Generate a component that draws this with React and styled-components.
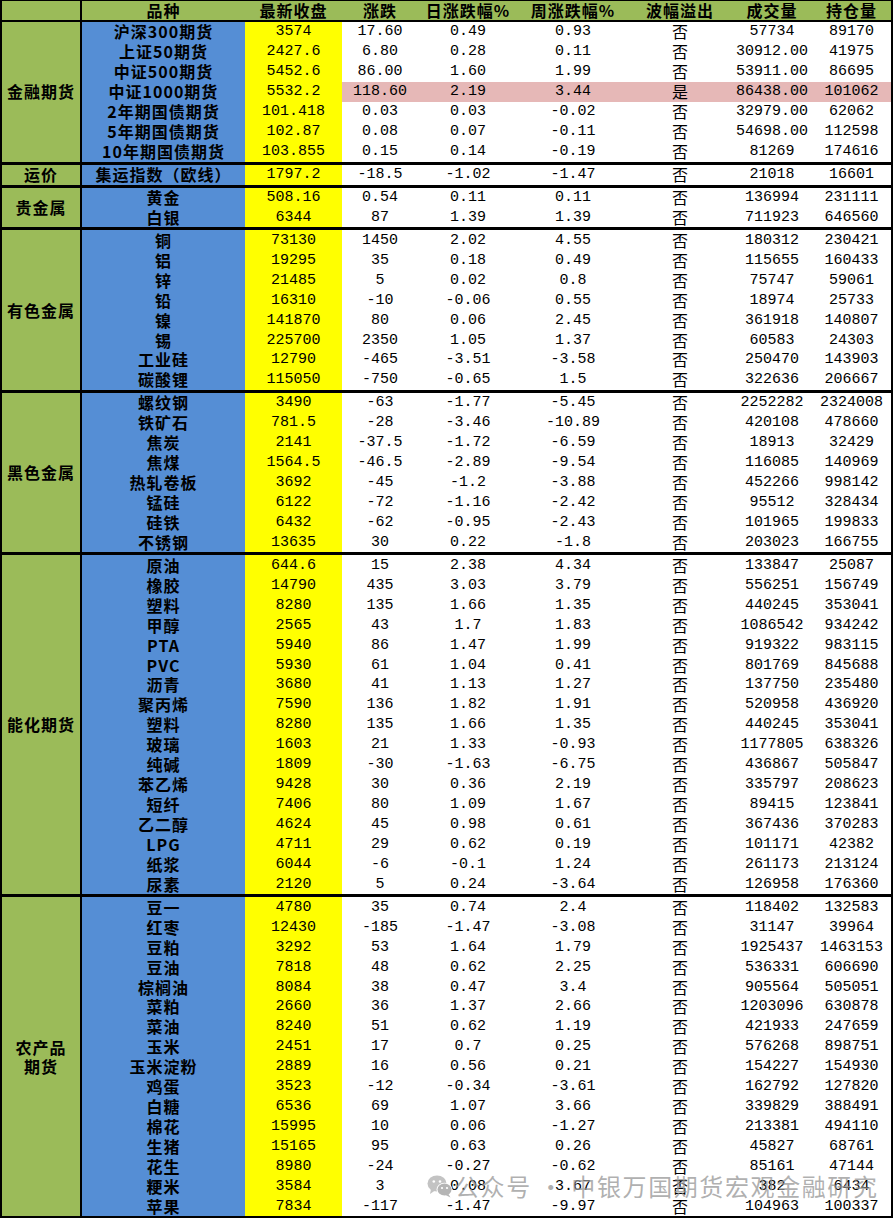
import React from 'react';
import styled, { createGlobalStyle } from 'styled-components';

const GlobalStyle = createGlobalStyle`
  html, body {
    margin: 0;
    padding: 0;
    background: #ffffff;
  }
  body {
    font-family: "Noto Sans CJK SC", "Liberation Sans", sans-serif;
    color: #000;
  }
`;

const COLS = '80px 163px 97px 76px 100px 110px 104px 80px 79px';
const ROW_COLS = '163px 97px 76px 100px 110px 104px 80px 79px';

const headers = ['品种', '最新收盘', '涨跌', '日涨跌幅%', '周涨跌幅%', '波幅溢出', '成交量', '持仓量'];

const groups = [
  {
    name: '金融期货',
    rows: [
      ['沪深300期货', '3574', '17.60', '0.49', '0.93', '否', '57734', '89170'],
      ['上证50期货', '2427.6', '6.80', '0.28', '0.11', '否', '30912.00', '41975'],
      ['中证500期货', '5452.6', '86.00', '1.60', '1.99', '否', '53911.00', '86695'],
      ['中证1000期货', '5532.2', '118.60', '2.19', '3.44', '是', '86438.00', '101062', true],
      ['2年期国债期货', '101.418', '0.03', '0.03', '-0.02', '否', '32979.00', '62062'],
      ['5年期国债期货', '102.87', '0.08', '0.07', '-0.11', '否', '54698.00', '112598'],
      ['10年期国债期货', '103.855', '0.15', '0.14', '-0.19', '否', '81269', '174616'],
    ],
  },
  {
    name: '运价',
    rows: [['集运指数（欧线）', '1797.2', '-18.5', '-1.02', '-1.47', '否', '21018', '16601']],
  },
  {
    name: '贵金属',
    rows: [
      ['黄金', '508.16', '0.54', '0.11', '0.11', '否', '136994', '231111'],
      ['白银', '6344', '87', '1.39', '1.39', '否', '711923', '646560'],
    ],
  },
  {
    name: '有色金属',
    rows: [
      ['铜', '73130', '1450', '2.02', '4.55', '否', '180312', '230421'],
      ['铝', '19295', '35', '0.18', '0.49', '否', '115655', '160433'],
      ['锌', '21485', '5', '0.02', '0.8', '否', '75747', '59061'],
      ['铅', '16310', '-10', '-0.06', '0.55', '否', '18974', '25733'],
      ['镍', '141870', '80', '0.06', '2.45', '否', '361918', '140807'],
      ['锡', '225700', '2350', '1.05', '1.37', '否', '60583', '24303'],
      ['工业硅', '12790', '-465', '-3.51', '-3.58', '否', '250470', '143903'],
      ['碳酸锂', '115050', '-750', '-0.65', '1.5', '否', '322636', '206667'],
    ],
  },
  {
    name: '黑色金属',
    rows: [
      ['螺纹钢', '3490', '-63', '-1.77', '-5.45', '否', '2252282', '2324008'],
      ['铁矿石', '781.5', '-28', '-3.46', '-10.89', '否', '420108', '478660'],
      ['焦炭', '2141', '-37.5', '-1.72', '-6.59', '否', '18913', '32429'],
      ['焦煤', '1564.5', '-46.5', '-2.89', '-9.54', '否', '116085', '140969'],
      ['热轧卷板', '3692', '-45', '-1.2', '-3.88', '否', '452266', '998142'],
      ['锰硅', '6122', '-72', '-1.16', '-2.42', '否', '95512', '328434'],
      ['硅铁', '6432', '-62', '-0.95', '-2.43', '否', '101965', '199833'],
      ['不锈钢', '13635', '30', '0.22', '-1.8', '否', '203023', '166755'],
    ],
  },
  {
    name: '能化期货',
    rows: [
      ['原油', '644.6', '15', '2.38', '4.34', '否', '133847', '25087'],
      ['橡胶', '14790', '435', '3.03', '3.79', '否', '556251', '156749'],
      ['塑料', '8280', '135', '1.66', '1.35', '否', '440245', '353041'],
      ['甲醇', '2565', '43', '1.7', '1.83', '否', '1086542', '934242'],
      ['PTA', '5940', '86', '1.47', '1.99', '否', '919322', '983115'],
      ['PVC', '5930', '61', '1.04', '0.41', '否', '801769', '845688'],
      ['沥青', '3680', '41', '1.13', '1.27', '否', '137750', '235480'],
      ['聚丙烯', '7590', '136', '1.82', '1.91', '否', '520958', '436920'],
      ['塑料', '8280', '135', '1.66', '1.35', '否', '440245', '353041'],
      ['玻璃', '1603', '21', '1.33', '-0.93', '否', '1177805', '638326'],
      ['纯碱', '1809', '-30', '-1.63', '-6.75', '否', '436867', '505847'],
      ['苯乙烯', '9428', '30', '0.36', '2.19', '否', '335797', '208623'],
      ['短纤', '7406', '80', '1.09', '1.67', '否', '89415', '123841'],
      ['乙二醇', '4624', '45', '0.98', '0.61', '否', '367436', '370283'],
      ['LPG', '4711', '29', '0.62', '0.19', '否', '101171', '42382'],
      ['纸浆', '6044', '-6', '-0.1', '1.24', '否', '261173', '213124'],
      ['尿素', '2120', '5', '0.24', '-3.64', '否', '126958', '176360'],
    ],
  },
  {
    name: '农产品\n期货',
    rows: [
      ['豆一', '4780', '35', '0.74', '2.4', '否', '118402', '132583'],
      ['红枣', '12430', '-185', '-1.47', '-3.08', '否', '31147', '39964'],
      ['豆粕', '3292', '53', '1.64', '1.79', '否', '1925437', '1463153'],
      ['豆油', '7818', '48', '0.62', '2.25', '否', '536331', '606690'],
      ['棕榈油', '8084', '38', '0.47', '3.4', '否', '905564', '505051'],
      ['菜粕', '2660', '36', '1.37', '2.66', '否', '1203096', '630878'],
      ['菜油', '8240', '51', '0.62', '1.19', '否', '421933', '247659'],
      ['玉米', '2451', '17', '0.7', '0.25', '否', '576268', '898751'],
      ['玉米淀粉', '2889', '16', '0.56', '0.21', '否', '154227', '154930'],
      ['鸡蛋', '3523', '-12', '-0.34', '-3.61', '否', '162792', '127820'],
      ['白糖', '6536', '69', '1.07', '3.66', '否', '339829', '388491'],
      ['棉花', '15995', '10', '0.06', '-1.27', '否', '213381', '494110'],
      ['生猪', '15165', '95', '0.63', '0.26', '否', '45827', '68761'],
      ['花生', '8980', '-24', '-0.27', '-0.62', '否', '85161', '47144'],
      ['粳米', '3584', '3', '0.08', '3.67', '否', '382', '6434'],
      ['苹果', '7834', '-117', '-1.47', '-9.97', '否', '104963', '100337'],
    ],
  },
];

function WeChatIcon() {
  return (
    <svg width="26" height="24" viewBox="0 0 26 24">
      <ellipse cx="10" cy="9.5" rx="9.5" ry="8" fill="#b9b9b9" />
      <path d="M4 15 L3 20 L8 16.5 Z" fill="#b9b9b9" />
      <circle cx="6.8" cy="7.5" r="1.3" fill="#fff" />
      <circle cx="13" cy="7.5" r="1.3" fill="#fff" />
      <ellipse cx="17.5" cy="15.5" rx="8" ry="6.8" fill="#fff" />
      <ellipse cx="17.5" cy="15.5" rx="7" ry="6" fill="#a9a9a9" />
      <path d="M21.5 20 L23.5 23.5 L18.5 21 Z" fill="#a9a9a9" />
      <circle cx="15" cy="14" r="1.1" fill="#fff" />
      <circle cx="20" cy="14" r="1.1" fill="#fff" />
    </svg>
  );
}

export default function App() {
  return (
    <>
      <GlobalStyle />
      <Page>
        <Sheet>
          <HeaderRow>
            <HeaderCorner />
            {headers.map((h) => (
              <HeaderCell key={h}>{h}</HeaderCell>
            ))}
          </HeaderRow>
          {groups.map((g, gi) => (
            <Group key={g.name} $first={gi === 0}>
              <Category>{g.name}</Category>
              <Rows>
                {g.rows.map((r, ri) => {
                  const hl = r[8] === true;
                  return (
                    <Row key={ri}>
                      <NameCell>{r[0]}</NameCell>
                      <CloseCell>{r[1]}</CloseCell>
                      <NumCell $hl={hl}>{r[2]}</NumCell>
                      <NumCell $hl={hl}>{r[3]}</NumCell>
                      <NumCell $hl={hl}>{r[4]}</NumCell>
                      <FlagCell $hl={hl}>{r[5]}</FlagCell>
                      <NumCell $hl={hl}>{r[6]}</NumCell>
                      <NumCell $hl={hl}>{r[7]}</NumCell>
                    </Row>
                  );
                })}
              </Rows>
            </Group>
          ))}
        </Sheet>
        <Watermark>
          <WeChatIcon />
          <span>公众号 · 中银万国期货宏观金融研究</span>
        </Watermark>
      </Page>
    </>
  );
}

const Page = styled.div`
  position: relative;
  width: 895px;
  height: 1221px;
  overflow: hidden;
`;

const Sheet = styled.div`
  width: 893px;
  box-sizing: border-box;
  border: 2px solid #000;
  border-top: 1px solid #000;
`;

const HeaderRow = styled.div`
  display: grid;
  grid-template-columns: ${COLS};
  grid-template-rows: 19px;
  height: 19px;
  background: #9bbb59;
  border-bottom: 2px solid #000;
`;

const HeaderCorner = styled.div`
  border-right: 2px solid #000;
`;

const HeaderCell = styled.div`
  display: flex;
  align-items: center;
  justify-content: center;
  font-weight: 700;
  font-size: 16px;
  letter-spacing: 1px;
  white-space: nowrap;
  line-height: 19px;
`;

const Group = styled.div`
  display: flex;
  border-top: ${(p) => (p.$first ? 'none' : '3px solid #000')};
`;

const Category = styled.div`
  width: 80px;
  box-sizing: border-box;
  flex-shrink: 0;
  border-right: 2px solid #000;
  background: #9bbb59;
  display: flex;
  align-items: center;
  justify-content: center;
  text-align: center;
  white-space: pre-line;
  font-weight: 700;
  font-size: 16px;
  letter-spacing: 1px;
  line-height: 19px;
  overflow: hidden;
`;

const Rows = styled.div`
  display: flex;
  flex-direction: column;
  flex: 1;
`;

const Row = styled.div`
  display: grid;
  grid-template-columns: ${ROW_COLS};
  grid-template-rows: 19.95px;
  height: 19.95px;
  flex-shrink: 0;
`;

const Cell = styled.div`
  display: flex;
  align-items: center;
  justify-content: center;
  white-space: nowrap;
  line-height: 19px;
  overflow: visible;
`;

const NameCell = styled(Cell)`
  background: #558ed5;
  font-weight: 700;
  font-size: 16px;
  letter-spacing: 1px;
`;

const CloseCell = styled(Cell)`
  background: #ffff00;
  font-family: "Liberation Mono", "DejaVu Sans Mono", monospace;
  font-size: 15px;
`;

const NumCell = styled(Cell)`
  background: ${(p) => (p.$hl ? '#e6b8b7' : '#ffffff')};
  font-family: "Liberation Mono", "DejaVu Sans Mono", monospace;
  font-size: 15px;
`;

const FlagCell = styled(Cell)`
  background: ${(p) => (p.$hl ? '#e6b8b7' : '#ffffff')};
  font-size: 16px;
  font-weight: 400;
`;

const Watermark = styled.div`
  position: absolute;
  left: 427px;
  top: 1168px;
  display: flex;
  align-items: center;
  gap: 2px;
  color: rgba(150, 150, 150, 0.75);
  font-family: "Noto Sans CJK SC", sans-serif;
  font-size: 24px;
  letter-spacing: 1.6px;
  white-space: nowrap;
  pointer-events: none;
  svg {
    opacity: 0.85;
  }
`;
